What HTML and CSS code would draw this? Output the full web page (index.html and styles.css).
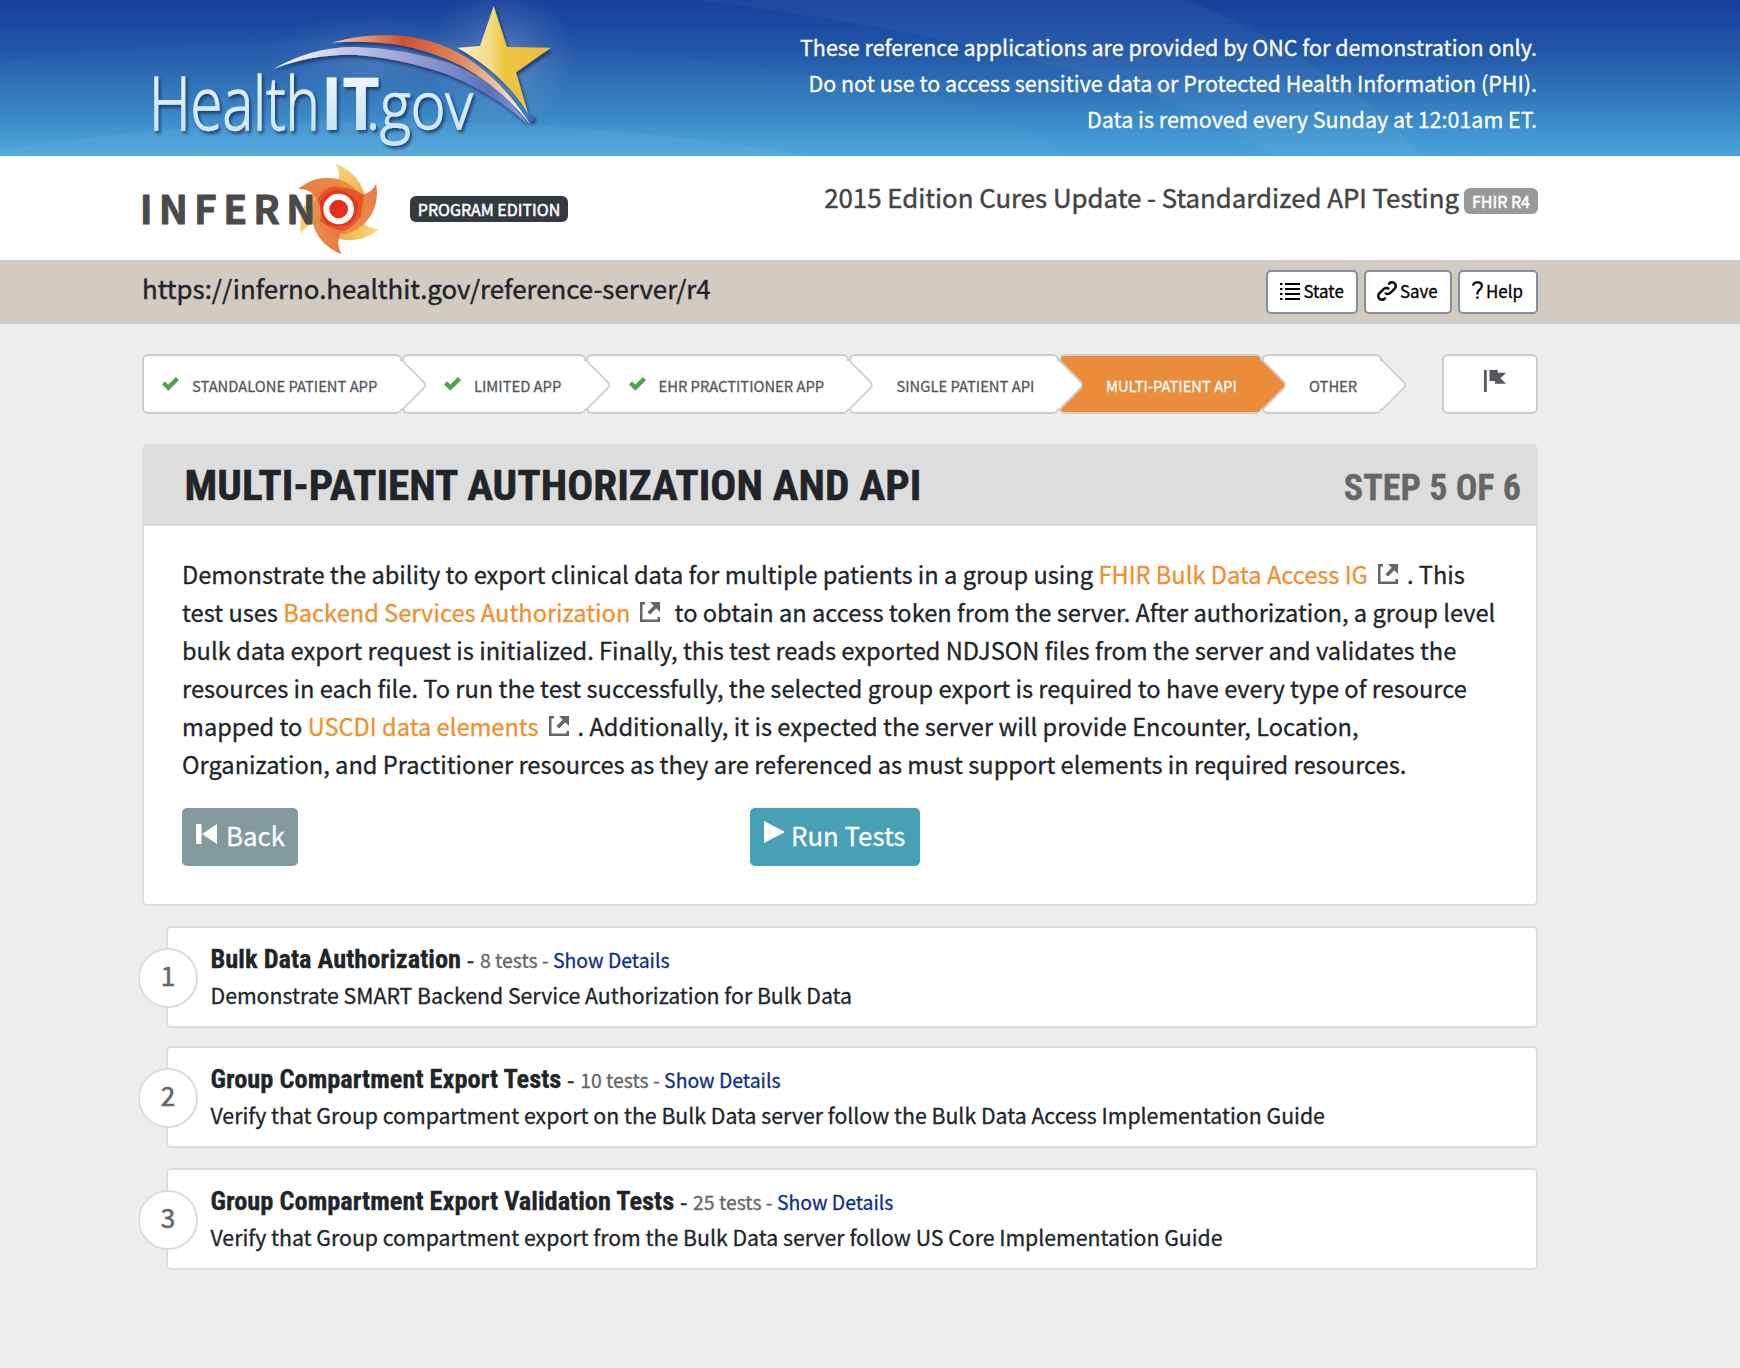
FILE: index.html
```
<!DOCTYPE html>
<html lang="en">
<head>
<meta charset="utf-8">
<title>Inferno - Program Edition</title>
<link rel="stylesheet" href="styles.css">
</head>
<body>
<svg class="defs" aria-hidden="true">
  <symbol id="check" viewBox="0 1 7.85 6.44"><path d="M6.41 1l-.69.72-2.78 2.78-.81-.78-.72-.72-1.41 1.41.72.72 1.5 1.5.69.72.72-.72 3.5-3.5.72-.72-1.44-1.41z"/></symbol>
  <symbol id="external" viewBox="0 0 8 8"><path d="M0 0v8h8v-2h-1v1h-6v-6h1v-1h-2zm4 0l1.5 1.5-2.5 2.5 1 1 2.5-2.5 1.500 1.500v-4h-4z"/></symbol>
</svg>

<header class="banner">
  <svg class="banner-swoosh" viewBox="0 0 1740 156" preserveAspectRatio="none" aria-hidden="true">
    <path d="M0 62C250 30 480 35 700 60C900 82 1030 118 1062 156H0Z" fill="#fff" opacity=".025"/>
    <path d="M690 0C860 18 1080 62 1190 110Q1250 136 1275 156H1420C1380 100 1280 40 1190 0Z" fill="#fff" opacity=".04"/>
    <path d="M0 150C240 110 560 112 810 156H0Z" fill="#fff" opacity=".05"/>
  </svg>
  <div class="container banner-row">
    <svg class="healthit" viewBox="0 0 1350 468" role="img" aria-label="HealthIT.gov">
      <defs>
        <linearGradient id="lt" x1="0" y1="230" x2="0" y2="400" gradientUnits="userSpaceOnUse"><stop offset="0" stop-color="#eef6fc"/><stop offset="1" stop-color="#c4e2f3"/></linearGradient>
        <linearGradient id="star"><stop offset="0" stop-color="#f8f0c8"/><stop offset=".35" stop-color="#f2dc86"/><stop offset=".5" stop-color="#eec63f"/><stop offset="1" stop-color="#efb93c"/></linearGradient>
        <linearGradient id="or"><stop offset="0" stop-color="#f3cdb2"/><stop offset=".2" stop-color="#e38a5c"/><stop offset=".36" stop-color="#d2502f"/><stop offset=".65" stop-color="#e2885c"/><stop offset=".9" stop-color="#f5d6c0"/><stop offset="1" stop-color="#fff"/></linearGradient>
        <linearGradient id="pu"><stop offset="0" stop-color="#fff"/><stop offset=".3" stop-color="#c3c4e6"/><stop offset=".6" stop-color="#8d97d0"/><stop offset=".85" stop-color="#5a72bb"/><stop offset="1" stop-color="#8aa0d6"/></linearGradient>
        <radialGradient id="glow"><stop offset="0" stop-color="#fff" stop-opacity=".24"/><stop offset=".6" stop-color="#fff" stop-opacity=".08"/><stop offset="1" stop-color="#fff" stop-opacity="0"/></radialGradient>
        <filter id="sh" x="-10%" y="-10%" width="120%" height="130%"><feDropShadow dx="6" dy="8" stdDeviation="5" flood-color="#0a2a5c" flood-opacity=".75"/></filter>
      </defs>
      <ellipse cx="1110" cy="170" rx="225" ry="220" fill="url(#glow)"/>
      <ellipse cx="740" cy="170" rx="330" ry="130" fill="url(#glow)" opacity=".6"/>
      <g filter="url(#sh)">
        <circle cx="1202" cy="354" r="10" fill="#4a68b4"/>
        <path d="M430 207Q550 138 680 141Q820 145 960 190Q1110 250 1192 371Q1090 280 950 222Q800 172 670 164Q540 163 430 207Z" fill="url(#pu)"/>
        <path d="M605 128Q690 104 770 106Q880 106 980 155Q1110 228 1200 372Q1120 270 1000 200Q900 150 790 132Q690 121 605 128Z" fill="url(#or)"/>
        <path d="M1091 18L1131 141L1263 143L1158 217L1194 340Q1120 220 982 143L1050 138Z" fill="url(#star)"/>
        <g fill="url(#lt)" class="healthit-text">
          <text x="57" y="389" textLength="512" lengthAdjust="spacingAndGlyphs">Health</text>
          <text class="it" x="573" y="389" textLength="176" lengthAdjust="spacingAndGlyphs">IT</text>
          <text class="gov" x="708" y="387" textLength="320" lengthAdjust="spacingAndGlyphs">.gov</text>
        </g>
      </g>
    </svg>
    <p class="notice">These reference applications are provided by ONC for demonstration only.<br>Do not use to access sensitive data or Protected Health Information (PHI).<br>Data is removed every Sunday at 12:01am ET.</p>
  </div>
</header>

<div class="brandbar">
  <div class="container brand-row">
    <svg class="inferno" viewBox="36 18 720 312" role="img" aria-label="Inferno">
      <defs>
        <linearGradient id="by" x1="0" y1="-135" x2="60" y2="0" gradientUnits="userSpaceOnUse"><stop offset="0" stop-color="#f7da78"/><stop offset="1" stop-color="#eaa042"/></linearGradient>
        <linearGradient id="bo" x1="0" y1="-135" x2="60" y2="0" gradientUnits="userSpaceOnUse"><stop offset="0" stop-color="#e87032"/><stop offset="1" stop-color="#ea8a48"/></linearGradient>
        <path id="blade" d="M-9-135C55-112 92-52 77 12C62 60 0 70-40 20C-34-20-26-48-14-63C2-80 8-108-9-135Z"/>
      </defs>
      <g transform="translate(626 177)">
        <g fill="url(#by)"><use href="#blade"/><use href="#blade" transform="rotate(120)"/><use href="#blade" transform="rotate(240)"/></g>
        <g fill="url(#bo)" opacity=".93"><use href="#blade" transform="rotate(60)"/><use href="#blade" transform="rotate(180)"/><use href="#blade" transform="rotate(300)"/></g>
        <path d="M-62-28Q-48-66-8-67Q48-64 76-42Q70 0 66 22Q40 60 14 66Q-26 60-56 36Q-50 6-62-28Z" fill="#e5461f" opacity=".75"/>
        <path d="M-56-20Q-45-50-6-58Q40-50 58-18Q60 20 34 46Q5 58-35 46Q-56 20-56-20Z" fill="#e5301e" opacity=".8"/>
        <circle r="37" fill="#e5301e" stroke="#fff" stroke-width="18"/>
      </g>
      <text class="inferno-text" y="221" x="29 86 192 280 370 469">INFERN</text>
    </svg>
    <span class="badge badge-dark">PROGRAM EDITION</span>
    <h1 class="suite">2015 Edition Cures Update - Standardized API Testing</h1>
    <span class="badge badge-grey">FHIR R4</span>
  </div>
</div>

<div class="serverbar">
  <div class="container server-row">
    <div class="server-url">https://inferno.healthit.gov/reference-server/r4</div>
    <div class="tools">
      <button class="tool tool-state"><svg viewBox="0 0 20 17"><path d="M0 0h2.500v2H0zM0 5h2.500v2H0zM0 10h2.500v2H0zM0 15h2.500v2H0zM5 0h15v2H5zM5 5h15v2H5zM5 10h15v2H5zM5 15h15v2H5z"/></svg>State</button>
      <button class="tool tool-save"><svg viewBox="0 0 8 8"><path d="M5.88.03c-.18.01-.36.03-.53.09-.27.1-.53.25-.75.47a.5.5 0 1 0 .69.69c.11-.11.24-.17.38-.22.35-.12.78-.07 1.060.22.39.39.39 1.040 0 1.440l-1.500 1.500c-.44.44-.8.48-1.060.47-.26-.01-.41-.13-.41-.13a.5.5 0 1 0-.5.88s.34.22.84.25c.5.03 1.200-.16 1.810-.78l1.500-1.500c.78-.78.78-2.040 0-2.810-.28-.28-.61-.45-.97-.53-.18-.04-.38-.04-.56-.03zm-2 2.310c-.5-.02-1.190.15-1.780.75l-1.500 1.500c-.78.78-.78 2.040 0 2.810.56.56 1.360.72 2.060.47.27-.1.53-.25.75-.47a.5.5 0 1 0-.69-.69c-.11.11-.24.17-.38.22-.35.12-.78.07-1.060-.22-.39-.39-.39-1.040 0-1.440l1.500-1.500c.4-.4.75-.45 1.030-.44.28.01.47.09.47.09a.5.5 0 1 0 .44-.88s-.34-.2-.84-.22z"/></svg>Save</button>
      <button class="tool tool-help"><svg viewBox="0 0 5 8"><path d="M2.470 0c-.85 0-1.480.26-1.880.66-.4.4-.54.9-.59 1.280l1 .13c.04-.25.12-.5.31-.69.19-.19.49-.38 1.160-.38.66 0 1.020.16 1.220.34.2.18.28.4.28.66 0 .83-.34 1.060-.84 1.500-.5.44-1.160 1.080-1.160 2.250v.25h1v-.25c0-.83.31-1.060.81-1.500.5-.44 1.190-1.080 1.190-2.250 0-.48-.17-1.020-.59-1.410-.43-.39-1.070-.59-1.910-.59zm-.5 7v1h1v-1h-1z"/></svg>Help</button>
    </div>
  </div>
</div>

<main class="container">
  <nav class="steps">
    <a class="step s1"><svg><use href="#check"/></svg>STANDALONE PATIENT APP</a>
    <a class="step s2"><svg><use href="#check"/></svg>LIMITED APP</a>
    <a class="step s3"><svg><use href="#check"/></svg>EHR PRACTITIONER APP</a>
    <a class="step s4">SINGLE PATIENT API</a>
    <a class="step s5 active">MULTI-PATIENT API</a>
    <a class="step s6">OTHER</a>
    <a class="flag"><svg viewBox="0 0 8 8"><path d="M0 0v8h1v-8h-1zm2 0v4h2v1h4l-2-1.970 2-2.030h-3v-1h-3z"/></svg></a>
  </nav>

  <section class="panel">
    <div class="panel-head">
      <h2>MULTI-PATIENT AUTHORIZATION AND API</h2>
      <div class="step-count">STEP 5 OF 6</div>
    </div>
    <div class="panel-body">
      <p class="desc">Demonstrate the ability to export clinical data for multiple patients in a group using <a>FHIR Bulk Data Access IG</a><svg class="ext"><use href="#external"/></svg>. This<br>
      test uses <a>Backend Services Authorization</a><svg class="ext"><use href="#external"/></svg> to obtain an access token from the server. After authorization, a group level<br>
      bulk data export request is initialized. Finally, this test reads exported NDJSON files from the server and validates the<br>
      resources in each file. To run the test successfully, the selected group export is required to have every type of resource<br>
      mapped to <a>USCDI data elements</a><svg class="ext"><use href="#external"/></svg>. Additionally, it is expected the server will provide Encounter, Location,<br>
      Organization, and Practitioner resources as they are referenced as must support elements in required resources.</p>
      <div class="actions">
        <button class="btn btn-back"><svg viewBox="0 0 21 20"><path d="M0 0h5.500v20H0zM6 10L21 0v20z"/></svg>Back</button>
        <button class="btn btn-run"><svg viewBox="0 0 21 22"><path d="M0 0v22l21-11z"/></svg>Run Tests</button>
      </div>
    </div>
  </section>

  <section class="group">
    <div class="num">1</div>
    <div class="group-title"><b>Bulk Data Authorization</b> - <small>8 tests - <a>Show Details</a></small></div>
    <div>Demonstrate SMART Backend Service Authorization for Bulk Data</div>
  </section>
  <section class="group">
    <div class="num">2</div>
    <div class="group-title"><b>Group Compartment Export Tests</b> - <small>10 tests - <a>Show Details</a></small></div>
    <div>Verify that Group compartment export on the Bulk Data server follow the Bulk Data Access Implementation Guide</div>
  </section>
  <section class="group third">
    <div class="num">3</div>
    <div class="group-title"><b>Group Compartment Export Validation Tests</b> - <small>25 tests - <a>Show Details</a></small></div>
    <div>Verify that Group compartment export from the Bulk Data server follow US Core Implementation Guide</div>
  </section>
</main>
</body>
</html>
```
FILE: styles.css
```
*, *::after { box-sizing: border-box; }
body {
  margin: 0;
  background: #eee;
  color: #212529;
  font-family: "Noto Sans CJK SC", "Noto Sans", sans-serif;
  font-size: 21.48px;
  line-height: 36px;
  -webkit-text-stroke: .3px;
}
h1, h2, p { margin: 0; font-weight: 400; }
button { font: inherit; -webkit-text-stroke: inherit; }
svg { fill: currentColor; flex: none; }
.defs { position: absolute; width: 0; height: 0; }
.container { width: 1396px; margin-left: 142px; }

.banner {
  position: relative;
  height: 156px;
  background: linear-gradient(#14409a, #2157a9 33%, #3178bd 62%, #48a6dc);
  color: #fff;
}
.banner-swoosh { position: absolute; inset: 0; width: 100%; height: 100%; }
.banner-row { position: relative; display: flex; justify-content: space-between; }
.healthit { width: 450px; height: 156px; margin-left: -12px; }
.healthit-text text { font: 300 222px "Open Sans", sans-serif; stroke: #d6eaf7; stroke-width: 4px; }
.healthit-text .it { font-weight: 700; stroke-width: 0; }
.healthit-text .gov { font-size: 198px; }
.notice { padding: 29px 1px 0 0; text-align: right; }

.brandbar { height: 104px; background: #fff; color: #444; }
.brand-row { display: flex; align-items: flex-start; }
.inferno { width: 240px; height: 104px; }
.inferno-text { font: 700 117px "Noto Sans CJK SC", sans-serif; fill: #4a4a4a; stroke: #4a4a4a; stroke-width: 2.5px; }
.badge { height: 26px; border-radius: 6px; line-height: 27px; color: #fff; text-align: center; white-space: nowrap; -webkit-text-stroke: .5px; }
.badge-dark { width: 158px; margin: 40px 0 0 28px; background: #343a40; font-size: 16px; }
.badge-grey { width: 74px; margin: 32px 0 0 5px; background: #999; font-size: 16px; }
.suite { margin-left: auto; padding-top: 23px; font-size: 25.8px; -webkit-text-stroke: .45px; }

.serverbar { height: 64px; border-top: 2px solid #ccc; border-bottom: 2px solid #ccc; background: #d2cbbf; }
.server-row { display: flex; justify-content: space-between; }
.server-url { padding-top: 8px; font-size: 25.82px; -webkit-text-stroke: .45px; }
.tools { display: flex; gap: 6px; padding-top: 8px; }
.tool {
  display: flex;
  height: 44px;
  padding: 0;
  border: 2px solid #868e96;
  border-radius: 5px;
  background: #fff;
  color: #000;
  font-size: 16.9px;
  line-height: 37px;
}
.tool-state { width: 92px; padding-left: 12px; }
.tool-state svg { width: 20px; height: 17px; margin: 11px 3.500px 0 0; }
.tool-save { width: 88px; padding-left: 11px; }
.tool-save svg { width: 20px; height: 20px; margin: 9px 3px 0 0; }
.tool-help { width: 80px; padding-left: 12px; }
.tool-help svg { width: 11px; height: 18px; margin: 9px 3px 0 0; }

.steps { display: flex; height: 60px; margin-top: 30px; font-size: 14.750px; }
.step {
  position: relative;
  display: flex;
  padding-left: 40px;
  border: 2px solid #ccc;
  border-radius: 6px;
  background: #fff;
  color: #54585d;
  line-height: 60px;
  white-space: nowrap;
}
.step::after {
  content: "";
  position: absolute;
  z-index: -1;
  top: 9px;
  right: -20px;
  width: 40px;
  height: 40px;
  border: 2px solid #ccc;
  border-left-color: transparent;
  border-bottom-color: transparent;
  border-radius: 6px;
  background: inherit;
  transform: rotate(45deg);
}
.step svg { width: 17px; height: 14px; margin: 21px 13px 0 0; color: #4fa64f; }
.s1 { z-index: 6; width: 260px; padding-left: 18px; }
.s2 { z-index: 5; width: 184px; }
.s3 { z-index: 4; width: 262.500px; padding-left: 40.500px; }
.s4 { z-index: 3; width: 210.500px; padding-left: 46px; }
.s5 { z-index: 2; width: 203px; padding-left: 45px; }
.s6 { z-index: 1; width: 120px; padding-left: 45px; }
.step.active { background: #ea8c3a; color: #fff; }
.flag {
  width: 96px;
  margin-left: auto;
  border: 2px solid #ccc;
  border-radius: 6px;
  background: #fff;
  color: #54585d;
}
.flag svg { display: block; width: 22px; height: 22px; margin: 14px 0 0 40px; }

.panel { height: 462px; margin-top: 30px; border: 2px solid #ddd; border-radius: 6px; background: #fff; }
.panel-head {
  display: flex;
  justify-content: space-between;
  height: 80px;
  padding: 11px 15px 0 40.500px;
  background: #ddd;
  font-family: "Roboto Condensed", Roboto, sans-serif;
}
.panel-head h2 { font-size: 43.2px; font-weight: 700; line-height: 57px; -webkit-text-stroke: .5px; }
.step-count { color: #666; font-size: 36px; font-weight: 700; line-height: 62px; }
.panel-body { padding: 29px 38px; }
.desc { font-size: 23.64px; line-height: 38px; white-space: nowrap; }
.desc a { color: #f0902f; }
.ext { width: 20px; height: 20px; margin: 0 9px 0 10px; color: #666; vertical-align: 0; }
.actions { display: flex; margin-top: 25px; }
.btn { display: flex; height: 58px; padding: 0 0 0 14px; border: 0; border-radius: 5px; color: #fff; font-size: 25.8px; line-height: 53px; }
.btn-back { width: 116px; background: #82999e; }
.btn-back svg { width: 21px; height: 20px; margin: 16px 9px 0 0; }
.btn-run { width: 170px; margin-left: 452px; background: #48a0b6; }
.btn-run svg { width: 21px; height: 22px; margin: 13px 6px 0 0; }

.group {
  position: relative;
  height: 102px;
  margin: 20px 0 18px 24px;
  padding: 13px 0 0 42.500px;
  border: 2px solid #ddd;
  border-radius: 5px;
  background: #fff;
  font-size: 21.28px;
  white-space: nowrap;
}
.group + .group { margin-top: 18px; }
.group + .group.third { margin-top: 20px; }
.group-title { height: 36px; }
.group b { margin-right: 1px; font: 700 26.4px/1 "Roboto Condensed", Roboto, sans-serif; }
.group small { margin-left: 1px; color: #666; font-size: 19.400px; }
.group small a { color: #0b2f8c; }
.num {
  position: absolute;
  left: -30px;
  top: 20px;
  width: 60px;
  height: 60px;
  border: 2px solid #ddd;
  border-radius: 50%;
  background: #fff;
  color: #666;
  font-size: 26px;
  line-height: 49px;
  text-align: center;
  -webkit-text-stroke: .6px;
}
```
